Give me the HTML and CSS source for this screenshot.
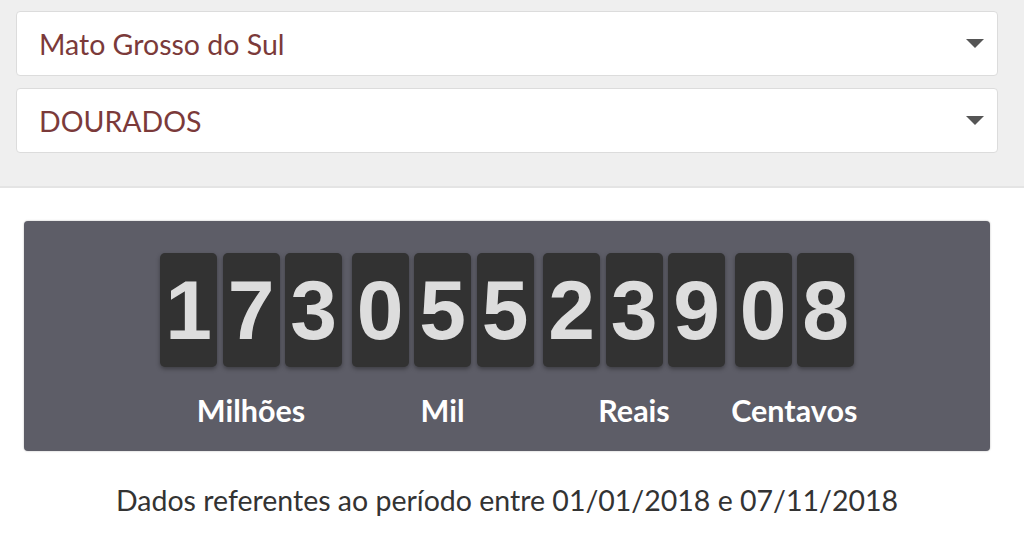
FILE: index.html
```html
<!DOCTYPE html>
<html lang="pt-BR">
<head>
  <meta charset="UTF-8" />
  <meta name="viewport" content="width=device-width, initial-scale=1.0" />
  <title>Impostômetro - Dourados</title>
  <link rel="stylesheet" href="styles.css">
</head>
<body>

  <!-- Filtros -->
  <div class="filters">
    <div class="select">
      <span class="select-value">Mato Grosso do Sul</span>
      <span class="select-arrow"></span>
    </div>
    <div class="select">
      <span class="select-value">DOURADOS</span>
      <span class="select-arrow"></span>
    </div>
  </div>

  <!-- Contador -->
  <div class="counter">
    <div class="group">
      <div class="digits">
        <span class="digit">1</span><span class="digit">7</span><span class="digit">3</span>
      </div>
      <div class="label">Milhões</div>
    </div>
    <div class="group">
      <div class="digits">
        <span class="digit">0</span><span class="digit">5</span><span class="digit">5</span>
      </div>
      <div class="label">Mil</div>
    </div>
    <div class="group">
      <div class="digits">
        <span class="digit">2</span><span class="digit">3</span><span class="digit">9</span>
      </div>
      <div class="label">Reais</div>
    </div>
    <div class="group">
      <div class="digits">
        <span class="digit">0</span><span class="digit">8</span>
      </div>
      <div class="label">Centavos</div>
    </div>
  </div>

  <p class="period">Dados referentes ao período entre 01/01/2018 e 07/11/2018</p>

</body>
</html>
```

FILE: styles.css
```css
* {
  margin: 0;
  padding: 0;
  box-sizing: border-box;
}
body {
  background: #ffffff;
  font-family: 'Lato', sans-serif;
  color: #333333;
}
/* Filtros */
.filters {
  background-color: #efefef;
  border-bottom: 2px solid #e4e4e4;
  padding: 11px 26px 33px 16px;
  display: flex;
  flex-direction: column;
  gap: 12px;
}
.select {
  background-color: #ffffff;
  border: 1px solid #dcdcdc;
  border-radius: 4px;
  height: 65px;
  display: flex;
  align-items: center;
  justify-content: space-between;
  padding: 0 13px 0 22px;
}
.select-value {
  color: #7b3a3a;
  font-size: 28.5px;
}
.select-arrow {
  width: 0;
  height: 0;
  border-left: 9px solid transparent;
  border-right: 9px solid transparent;
  border-top: 9px solid #555555;
}
/* Contador */
.counter {
  margin: 33px 34px 0 24px;
  height: 230px;
  background-color: #5d5d67;
  border-radius: 4px;
  box-shadow: 0 0 2px rgba(0, 0, 0, 0.3);
  display: flex;
  justify-content: center;
  gap: 9.5px;
  padding-top: 32px;
}
.group {
  display: flex;
  flex-direction: column;
  align-items: center;
}
.digits {
  display: flex;
  gap: 5.5px;
}
.digit {
  width: 57px;
  height: 114px;
  background-color: #323232;
  border-radius: 5px;
  box-shadow: 0 2px 4px rgba(0, 0, 0, 0.35);
  color: #dddddd;
  font-family: 'Liberation Sans', Arial, sans-serif;
  font-weight: bold;
  font-size: 84px;
  line-height: 114px;
  text-align: center;
}
/* the label must not widen its group */
.label {
  width: 0;
  display: flex;
  justify-content: center;
  white-space: nowrap;
  margin-top: 26px;
  color: #ffffff;
  font-weight: bold;
  font-size: 30.5px;
  line-height: 34px;
}
.period {
  margin-top: 32px;
  text-align: center;
  font-size: 28.5px;
  color: #333333;
  padding-right: 10px;
}
```
